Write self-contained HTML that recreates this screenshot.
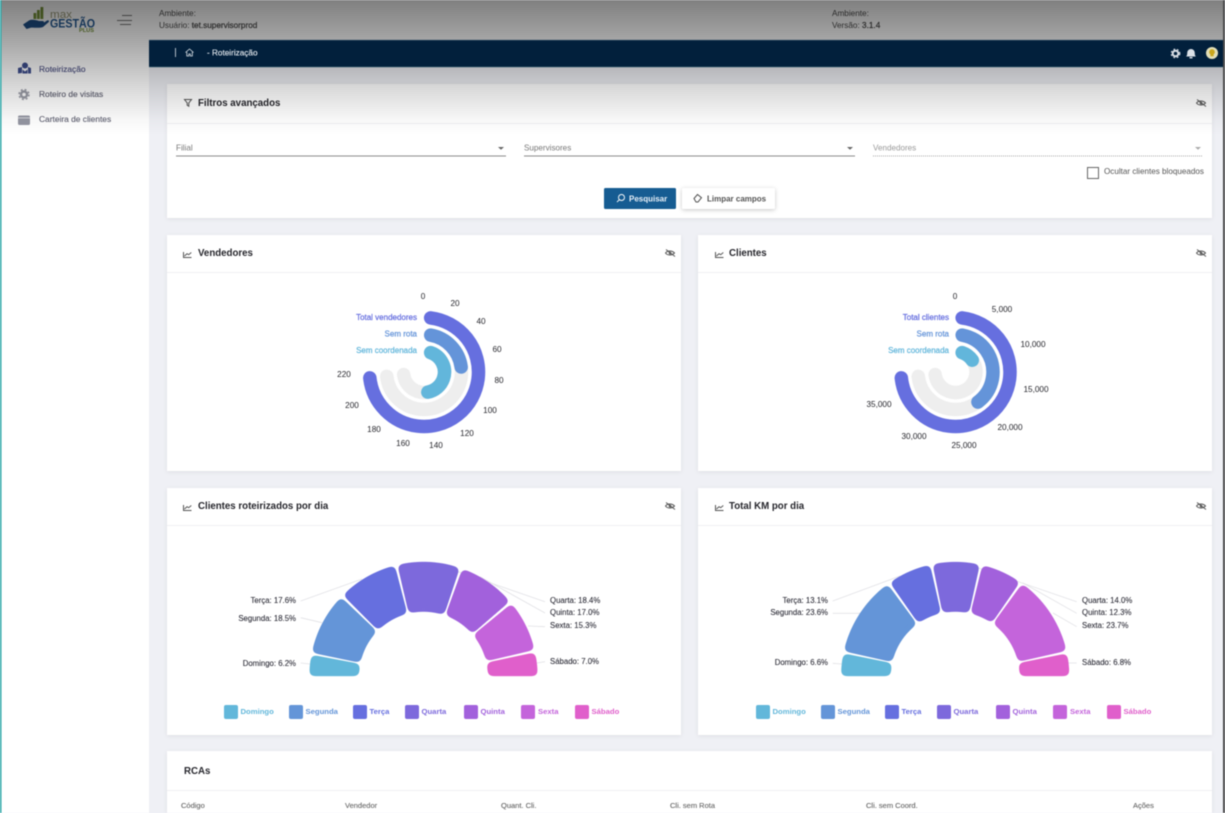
<!DOCTYPE html>
<html lang="pt-BR">
<head>
<meta charset="utf-8">
<title>Roteirização</title>
<style>
html,body{margin:0;padding:0;width:1225px;height:813px;overflow:hidden;background:#eff0f5}
svg{display:block;filter:blur(.4px)}
text{font-family:"Liberation Sans",sans-serif;white-space:pre}
.h{font-size:8.2px;fill:#4c4c4c}
.hb{stroke:#4c4c4c;stroke-width:.22}
.s{font-size:8.4px;fill:#5e5f70;stroke:#5e5f70;stroke-width:.12}
.ti{font-size:9.7px;font-weight:700;fill:#26262c}
.in{font-size:8.1px;fill:#777}
.ax{font-size:8.2px;fill:#26262c}
.lb{font-size:7.8px;fill:#2a2a35;stroke:#2a2a35;stroke-width:.08}
.lg{font-size:7.7px;font-weight:700}
.rl{font-size:8px;stroke-width:.22}
.th{font-size:7.5px;fill:#666;stroke:#666;stroke-width:.1}
.card{fill:#fff;filter:drop-shadow(0 1px 2px rgba(0,0,0,.07))}
.ln{stroke:#f0f0f3;stroke-width:1}
.ic{fill:none;stroke:#555;stroke-width:1}
.ld{fill:none;stroke:#e2e2e6;stroke-width:.8}
.ring{fill:none;stroke-width:13.5;stroke-linecap:round}
.seg{fill:none;stroke-width:49.5}
</style>
</head>
<body>
<svg width="1225" height="813" viewBox="0 0 1225 813" xmlns="http://www.w3.org/2000/svg">
<defs>
<linearGradient id="ov" x1="0" y1="0" x2="0" y2="1">
<stop offset="0" stop-color="#000" stop-opacity=".5"/>
<stop offset=".296" stop-color="#000" stop-opacity=".35"/>
<stop offset=".667" stop-color="#000" stop-opacity=".14"/>
<stop offset=".889" stop-color="#000" stop-opacity=".03"/>
<stop offset="1" stop-color="#000" stop-opacity="0"/>
</linearGradient>
<filter id="goo" filterUnits="userSpaceOnUse" x="0" y="0" width="1225" height="813" color-interpolation-filters="sRGB">
<feGaussianBlur stdDeviation="3"/>
<feColorMatrix type="matrix" values="1 0 0 0 0 0 1 0 0 0 0 0 1 0 0 0 0 0 14 -6.2"/>
</filter>
</defs>

<rect width="1225" height="813" fill="#eff0f5"/>
<!-- header and sidebar -->
<rect x="0" y="0" width="1225" height="40" fill="#fff"/>
<rect x="0" y="0" width="149" height="813" fill="#fff"/>

<!-- cards -->
<rect class="card" x="167" y="84" width="1045" height="134"/>
<rect class="card" x="167" y="235" width="514" height="236"/>
<rect class="card" x="698" y="235" width="514" height="236"/>
<rect class="card" x="167" y="488" width="514" height="247"/>
<rect class="card" x="698" y="488" width="514" height="247"/>
<rect class="card" x="167" y="751" width="1045" height="62"/>
<line class="ln" x1="167" x2="1212" y1="123.5" y2="123.5"/>
<line class="ln" x1="167" x2="681" y1="272.5" y2="272.5"/>
<line class="ln" x1="698" x2="1212" y1="272.5" y2="272.5"/>
<line class="ln" x1="167" x2="681" y1="525.5" y2="525.5"/>
<line class="ln" x1="698" x2="1212" y1="525.5" y2="525.5"/>
<line class="ln" x1="167" x2="1212" y1="790.5" y2="790.5"/>

<!-- logo -->
<g>
<rect x="33.500" y="13" width="2.800" height="6" fill="#76923a"/>
<rect x="37" y="10" width="2.800" height="9" fill="#76923a"/>
<rect x="40.500" y="7" width="2.800" height="12" fill="#76923a"/>
<path d="M23 24.500 L29 20.500 C32 19 36 20.200 39 21 L42.500 21 C44.500 21 44.500 23.400 42.500 23.400 L37 23.800 L43 23.200 L47 20.500 C48.800 19.600 49.500 21.200 48.500 22.300 L43 27 C40 28.300 34.500 27.500 31 27.600 L26.500 29 Z" fill="#1f4f86"/>
<text x="50" y="18" font-size="11" fill="#9a9a78" textLength="22" lengthAdjust="spacingAndGlyphs">max</text>
<text x="50" y="27.500" font-size="11.500" font-weight="700" fill="#255a94" textLength="45" lengthAdjust="spacingAndGlyphs">GESTÃO</text>
<text x="79" y="32" font-size="5.500" font-weight="700" fill="#76923a" textLength="15" lengthAdjust="spacingAndGlyphs">PLUS</text>
</g>
<g stroke="#777" stroke-width="1" fill="none">
<line x1="122" x2="132" y1="15.500" y2="15.500"/>
<line x1="117" x2="132" y1="20.500" y2="20.500"/>
<line x1="120" x2="131" y1="24.500" y2="24.500"/>
</g>
<text class="h" x="159" y="16">Ambiente:</text>
<text class="h" x="159" y="28">Usuário: <tspan class="hb">tet.supervisorprod</tspan></text>
<text class="h" x="832" y="16">Ambiente:</text>
<text class="h" x="832" y="28">Versão: <tspan class="hb">3.1.4</tspan></text>

<!-- sidebar -->
<g fill="#3f4f8f">
<circle cx="25" cy="65.500" r="3"/><path d="M18 68l4-1v6l-4 .5zM22.500 69.500l2.500 2 2.500-2v4h-5zM28 67l3 1v5.500h-3z"/>
</g>
<text class="s" x="39" y="72" style="fill:#4f5385;stroke:#4f5385">Roteirização</text>
<g>
<circle cx="24" cy="94.500" r="3" fill="none" stroke="#9a9ca6" stroke-width="2.400"/>
<circle cx="24" cy="94.500" r="5" fill="none" stroke="#9a9ca6" stroke-width="1.400" stroke-dasharray="2 2"/>
</g>
<text class="s" x="39" y="97">Roteiro de visitas</text>
<rect x="18" y="115.500" width="12" height="9.500" rx="1.500" fill="#9496a2"/>
<rect x="18" y="117.500" width="12" height=".8" fill="#e4e4e8"/>
<text class="s" x="39" y="122">Carteira de clientes</text>

<!-- filtros -->
<path class="ic" d="M184.500 99.500h7l-2.700 3.400v3.300l-1.600-1v-2.300z"/>
<text class="ti" x="198" y="106">Filtros avançados</text>
<g id="eye"><path class="ic" d="M1196.500 103c2-2.600 6.500-2.600 9 0-2.500 2.600-7 2.600-9 0z"/><circle cx="1201" cy="103" r="1.300" fill="#555"/><line x1="1197" y1="99.500" x2="1206" y2="106.500" stroke="#555" stroke-width=".9"/></g>
<text class="in" x="176" y="150.500">Filial</text>
<text class="in" x="524" y="150.500">Supervisores</text>
<text class="in" x="873" y="150.500" style="fill:#999">Vendedores</text>
<line x1="176" x2="506" y1="156" y2="156" stroke="#8a8a8a"/>
<line x1="524" x2="855" y1="156" y2="156" stroke="#8a8a8a"/>
<line x1="873" x2="1203" y1="156" y2="156" stroke="#aaa" stroke-dasharray="1 1"/>
<path d="M498 147h6l-3 2.800z" fill="#666"/>
<path d="M847 147h6l-3 2.800z" fill="#666"/>
<path d="M1195 147h6l-3 2.800z" fill="#aaa"/>
<rect x="1087.500" y="167.500" width="11" height="11" fill="#fff" stroke="#666"/>
<text class="in" x="1104" y="174" style="fill:#555">Ocultar clientes bloqueados</text>
<rect x="604" y="188" width="72" height="21" rx="1.500" fill="#165c92"/>
<circle cx="621.500" cy="197.500" r="3" fill="none" stroke="#fff" stroke-width=".9"/>
<line x1="619.300" y1="199.800" x2="617" y2="202" stroke="#fff" stroke-width=".9"/>
<text x="629" y="201.500" font-size="8" font-weight="700" fill="#e8f0f8">Pesquisar</text>
<rect x="682" y="188" width="93" height="21" rx="1.500" fill="#fff" style="filter:drop-shadow(0 1px 2px rgba(0,0,0,.22))"/>
<path class="ic" d="M694 198.500l3.500-4 4 3.200-3.500 4.300h-2z"/>
<text x="707" y="201.500" font-size="8" font-weight="700" fill="#555">Limpar campos</text>

<!-- card titles -->
<g id="c1"><path class="ic" d="M183.500 252v5.500h8"/><path class="ic" d="M184.500 256l2.500-2.300 1.700 1 2.600-2.200"/></g>
<text class="ti" x="198" y="256">Vendedores</text>
<use href="#eye" x="-531" y="150"/>
<use href="#c1" x="532"/>
<text class="ti" x="729" y="256">Clientes</text>
<use href="#eye" y="150"/>
<use href="#c1" y="253"/>
<text class="ti" x="198" y="509">Clientes roteirizados por dia</text>
<use href="#eye" x="-531" y="403"/>
<use href="#c1" x="532" y="253"/>
<text class="ti" x="729" y="509">Total KM por dia</text>
<use href="#eye" y="403"/>

<!-- radial 1 -->
<circle class="ring" cx="424" cy="372" r="20.500" stroke="#eeeeee" pathLength="360" stroke-dasharray="245 360" transform="rotate(-71 424 372)"/>
<circle class="ring" cx="424" cy="372" r="37.500" stroke="#eeeeee" pathLength="360" stroke-dasharray="253 360" transform="rotate(-79.700 424 372)"/>
<circle class="ring" cx="424" cy="372" r="54.500" stroke="#666fdf" pathLength="360" stroke-dasharray="257 360" transform="rotate(-83 424 372)"/>
<circle class="ring" cx="424" cy="372" r="37.500" stroke="#6494d9" pathLength="360" stroke-dasharray="72 360" transform="rotate(-79.700 424 372)"/>
<circle class="ring" cx="424" cy="372" r="20.500" stroke="#62b6db" pathLength="360" stroke-dasharray="151 360" transform="rotate(-71 424 372)"/>
<text class="rl" x="417" y="320" text-anchor="end" fill="#666fdf" stroke="#666fdf">Total vendedores</text>
<text class="rl" x="417" y="336.500" text-anchor="end" fill="#6494d9" stroke="#6494d9">Sem rota</text>
<text class="rl" x="417" y="353" text-anchor="end" fill="#62b6db" stroke="#62b6db">Sem coordenada</text>
<g text-anchor="middle">
<text class="ax" x="423" y="299">0</text>
<text class="ax" x="455" y="306">20</text>
<text class="ax" x="481" y="324">40</text>
<text class="ax" x="497" y="352">60</text>
<text class="ax" x="499" y="383">80</text>
<text class="ax" x="490" y="413">100</text>
<text class="ax" x="467" y="436">120</text>
<text class="ax" x="436" y="448">140</text>
<text class="ax" x="403" y="446">160</text>
<text class="ax" x="374" y="432">180</text>
<text class="ax" x="352" y="408">200</text>
<text class="ax" x="344" y="377">220</text>
</g>

<!-- radial 2 -->
<circle class="ring" cx="955.500" cy="372" r="20.500" stroke="#eeeeee" pathLength="360" stroke-dasharray="245 360" transform="rotate(-71 955.500 372)"/>
<circle class="ring" cx="955.500" cy="372" r="37.500" stroke="#eeeeee" pathLength="360" stroke-dasharray="253 360" transform="rotate(-79.700 955.500 372)"/>
<circle class="ring" cx="955.500" cy="372" r="54.500" stroke="#666fdf" pathLength="360" stroke-dasharray="257 360" transform="rotate(-83 955.500 372)"/>
<circle class="ring" cx="955.500" cy="372" r="37.500" stroke="#6494d9" pathLength="360" stroke-dasharray="133 360" transform="rotate(-79.700 955.500 372)"/>
<circle class="ring" cx="955.500" cy="372" r="20.500" stroke="#62b6db" pathLength="360" stroke-dasharray="36 360" transform="rotate(-71 955.500 372)"/>
<text class="rl" x="949" y="320" text-anchor="end" fill="#666fdf" stroke="#666fdf">Total clientes</text>
<text class="rl" x="949" y="336.500" text-anchor="end" fill="#6494d9" stroke="#6494d9">Sem rota</text>
<text class="rl" x="949" y="353" text-anchor="end" fill="#62b6db" stroke="#62b6db">Sem coordenada</text>
<g text-anchor="middle">
<text class="ax" x="955" y="299">0</text>
<text class="ax" x="1002" y="312">5,000</text>
<text class="ax" x="1033" y="347">10,000</text>
<text class="ax" x="1036" y="392">15,000</text>
<text class="ax" x="1010" y="430">20,000</text>
<text class="ax" x="964" y="448">25,000</text>
<text class="ax" x="914" y="439">30,000</text>
<text class="ax" x="879" y="407">35,000</text>
</g>

<!-- pie 1 -->
<path class="ld" d="M300.700 601L362 579"/>
<path class="ld" d="M300.700 617.700L322 622.700"/>
<path class="ld" d="M300.700 663L310 664"/>
<path class="ld" d="M430 562L545 601.700"/>
<path class="ld" d="M480 576.700L545 613"/>
<path class="ld" d="M528 626L545 626.700"/>
<path class="ld" d="M537 663L545 661.700"/>
<g filter="url(#goo)"><circle class="seg" cx="423.500" cy="676" r="89.250" stroke="#62b7da" pathLength="360" stroke-dasharray="10.700 360" transform="rotate(180 423.500 676)"/></g>
<g filter="url(#goo)"><circle class="seg" cx="423.500" cy="676" r="89.250" stroke="#6495d8" pathLength="360" stroke-dasharray="31.900 360" transform="rotate(191.860 423.500 676)"/></g>
<g filter="url(#goo)"><circle class="seg" cx="423.500" cy="676" r="89.250" stroke="#666fdf" pathLength="360" stroke-dasharray="30.280 360" transform="rotate(225.160 423.500 676)"/></g>
<g filter="url(#goo)"><circle class="seg" cx="423.500" cy="676" r="89.250" stroke="#7d69dc" pathLength="360" stroke-dasharray="31.720 360" transform="rotate(256.840 423.500 676)"/></g>
<g filter="url(#goo)"><circle class="seg" cx="423.500" cy="676" r="89.250" stroke="#a261dc" pathLength="360" stroke-dasharray="29.200 360" transform="rotate(289.960 423.500 676)"/></g>
<g filter="url(#goo)"><circle class="seg" cx="423.500" cy="676" r="89.250" stroke="#c464db" pathLength="360" stroke-dasharray="26.140 360" transform="rotate(320.560 423.500 676)"/></g>
<g filter="url(#goo)"><circle class="seg" cx="423.500" cy="676" r="89.250" stroke="#e05fcb" pathLength="360" stroke-dasharray="11.900 360" transform="rotate(348.100 423.500 676)"/></g>
<g text-anchor="end">
<text class="lb" x="296" y="603">Terça: 17.6%</text>
<text class="lb" x="296" y="621">Segunda: 18.5%</text>
<text class="lb" x="296" y="666">Domingo: 6.2%</text>
</g>
<text class="lb" x="550" y="603">Quarta: 18.4%</text>
<text class="lb" x="550" y="615">Quinta: 17.0%</text>
<text class="lb" x="550" y="628">Sexta: 15.3%</text>
<text class="lb" x="550" y="664">Sábado: 7.0%</text>
<g id="lg1">
<rect x="224" y="705" width="14" height="14" rx="2" fill="#62b7da"/>
<rect x="289" y="705" width="14" height="14" rx="2" fill="#6495d8"/>
<rect x="353" y="705" width="14" height="14" rx="2" fill="#666fdf"/>
<rect x="405" y="705" width="14" height="14" rx="2" fill="#7d69dc"/>
<rect x="464" y="705" width="14" height="14" rx="2" fill="#a261dc"/>
<rect x="521" y="705" width="14" height="14" rx="2" fill="#c464db"/>
<rect x="575" y="705" width="14" height="14" rx="2" fill="#e05fcb"/>
<text class="lg" x="240.500" y="714" fill="#62b7da">Domingo</text>
<text class="lg" x="305.500" y="714" fill="#6495d8">Segunda</text>
<text class="lg" x="369.500" y="714" fill="#666fdf">Terça</text>
<text class="lg" x="421.500" y="714" fill="#7d69dc">Quarta</text>
<text class="lg" x="480.500" y="714" fill="#a261dc">Quinta</text>
<text class="lg" x="538" y="714" fill="#c464db">Sexta</text>
<text class="lg" x="591.500" y="714" fill="#e05fcb">Sábado</text>
</g>

<!-- pie 2 -->
<path class="ld" d="M832.700 601L900 576"/>
<path class="ld" d="M832.700 613.300L860 613.300"/>
<path class="ld" d="M832.700 663.300L841.700 664"/>
<path class="ld" d="M1076.700 601.700L963 562.700"/>
<path class="ld" d="M1076.700 613.300L1023 583"/>
<path class="ld" d="M1076.700 626.700L1053 613"/>
<path class="ld" d="M1076.700 663L1068 663"/>
<g filter="url(#goo)"><circle class="seg" cx="955.200" cy="676" r="89.250" stroke="#62b7da" pathLength="360" stroke-dasharray="11.400 360" transform="rotate(180 955.200 676)"/></g>
<g filter="url(#goo)"><circle class="seg" cx="955.200" cy="676" r="89.250" stroke="#6495d8" pathLength="360" stroke-dasharray="41.080 360" transform="rotate(192.580 955.200 676)"/></g>
<g filter="url(#goo)"><circle class="seg" cx="955.200" cy="676" r="89.250" stroke="#666fdf" pathLength="360" stroke-dasharray="22.180 360" transform="rotate(235.060 955.200 676)"/></g>
<g filter="url(#goo)"><circle class="seg" cx="955.200" cy="676" r="89.250" stroke="#7d69dc" pathLength="360" stroke-dasharray="23.800 360" transform="rotate(258.640 955.200 676)"/></g>
<g filter="url(#goo)"><circle class="seg" cx="955.200" cy="676" r="89.250" stroke="#a261dc" pathLength="360" stroke-dasharray="20.740 360" transform="rotate(283.840 955.200 676)"/></g>
<g filter="url(#goo)"><circle class="seg" cx="955.200" cy="676" r="89.250" stroke="#c464db" pathLength="360" stroke-dasharray="41.260 360" transform="rotate(305.980 955.200 676)"/></g>
<g filter="url(#goo)"><circle class="seg" cx="955.200" cy="676" r="89.250" stroke="#e05fcb" pathLength="360" stroke-dasharray="11.360 360" transform="rotate(348.640 955.200 676)"/></g>
<g text-anchor="end">
<text class="lb" x="828" y="603">Terça: 13.1%</text>
<text class="lb" x="828" y="615">Segunda: 23.6%</text>
<text class="lb" x="828" y="665">Domingo: 6.6%</text>
</g>
<text class="lb" x="1082" y="603">Quarta: 14.0%</text>
<text class="lb" x="1082" y="615">Quinta: 12.3%</text>
<text class="lb" x="1082" y="628">Sexta: 23.7%</text>
<text class="lb" x="1082" y="665">Sábado: 6.8%</text>
<use href="#lg1" x="532"/>

<!-- RCAs -->
<text class="ti" x="184" y="774">RCAs</text>
<text class="th" x="181" y="808">Código</text>
<text class="th" x="345" y="808">Vendedor</text>
<text class="th" x="501" y="808">Quant. Cli.</text>
<text class="th" x="670" y="808">Cli. sem Rota</text>
<text class="th" x="866" y="808">Cli. sem Coord.</text>
<text class="th" x="1133" y="808">Ações</text>

<!-- top shade -->
<rect x="0" y="0" width="1225" height="135" fill="url(#ov)"/>

<!-- navbar -->
<rect x="149" y="40" width="1076" height="27" fill="#02203c"/>
<line x1="149" x2="1225" y1="40" y2="40" stroke="#5a7080" stroke-width=".6"/>
<line x1="149" x2="1225" y1="67" y2="67" stroke="#3d6a78" stroke-width=".6"/>
<line x1="175.500" x2="175.500" y1="48" y2="57" stroke="#dfe5ea" stroke-width=".8"/>
<path d="M185.500 52.500l4-3.500 4 3.500M186.800 52v4h2v-2h1.500v2h2v-4" fill="none" stroke="#dfe5ea" stroke-width=".8"/>
<text x="207" y="55.500" font-size="8.200" fill="#e8edf2" stroke="#e8edf2" stroke-width=".1">- Roteirização</text>
<circle cx="1175.500" cy="53.500" r="2.800" fill="none" stroke="#dde2e8" stroke-width="2"/>
<circle cx="1175.500" cy="53.500" r="4.300" fill="none" stroke="#dde2e8" stroke-width="1.100" stroke-dasharray="1.800 1.800"/>
<path d="M1186 56.500c1.300-1 1.100-2.400 1.300-4.300.2-1.700 1.700-3.200 3.700-3.200s3.500 1.500 3.700 3.200c.2 1.900 0 3.300 1.300 4.300z" fill="#dde2e8"/>
<rect x="1189.500" y="57" width="3" height="1.400" fill="#dde2e8"/>
<circle cx="1212" cy="53" r="6" fill="#e3dfb8"/>
<path d="M1212 49.300a2.800 2.800 0 0 1 1.600 5.100v1.800h-3.200v-1.800a2.800 2.800 0 0 1 1.600-5.100z" fill="#c9a61d"/>

<!-- edges -->
<rect x="0" y="0" width="1.500" height="813" fill="#2fa9a8"/>
<rect x="1223" y="0" width="2" height="813" fill="#4a4a4a"/>
</svg>
</body>
</html>
